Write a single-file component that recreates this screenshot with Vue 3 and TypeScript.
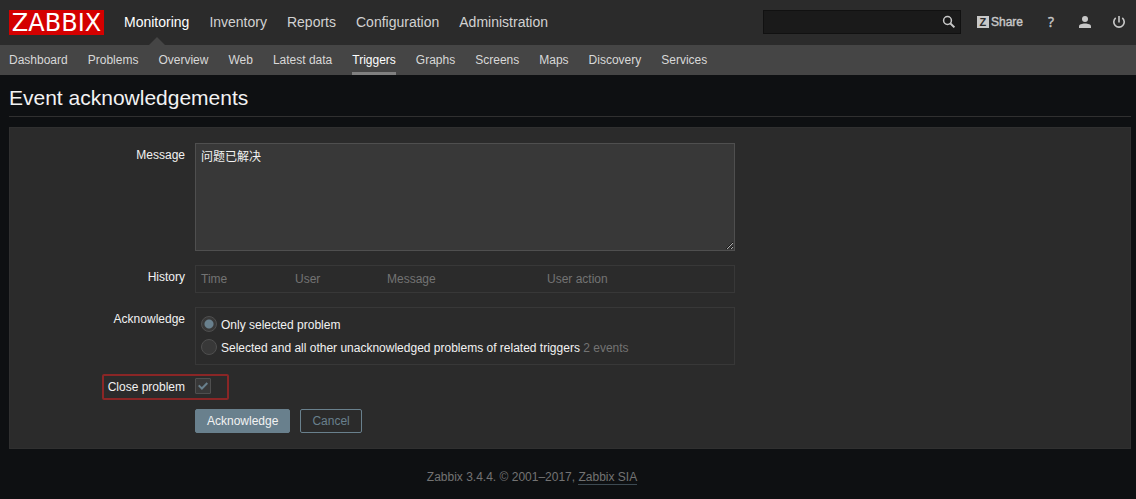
<script setup lang="ts">
import { ref } from 'vue'

const mainMenu: string[] = ['Monitoring', 'Inventory', 'Reports', 'Configuration', 'Administration']
const subMenu: string[] = [
  'Dashboard', 'Problems', 'Overview', 'Web', 'Latest data', 'Triggers',
  'Graphs', 'Screens', 'Maps', 'Discovery', 'Services',
]
const historyColumns: string[] = ['Time', 'User', 'Message', 'User action']

const activeMain = ref('Monitoring')
const activeSub = ref('Triggers')
const search = ref('')
const message = ref('问题已解决')
const scope = ref<'selected' | 'all'>('selected')
const closeProblem = ref(true)
</script>

<template>
  <div class="page">
    <header class="top">
      <a class="logo" href="#">ZABBIX</a>
      <nav class="main-nav" aria-label="Main">
        <a
          v-for="item in mainMenu"
          :key="item"
          href="#"
          :class="{ active: item === activeMain }"
          @click.prevent="activeMain = item"
        >{{ item }}</a>
      </nav>
      <form class="search" role="search" @submit.prevent>
        <input v-model="search" type="text" aria-label="Search">
        <button type="submit" aria-label="Search">
          <svg width="14" height="14" viewBox="0 0 14 14" fill="none" stroke="#c8c8c8">
            <circle cx="5.5" cy="5.5" r="3.9" stroke-width="1.5" />
            <path d="M8.2 8.2 L12.4 12.4" stroke-width="2" />
          </svg>
        </button>
      </form>
      <div class="tools">
        <a class="share" href="#"><span class="z-mark">Z</span>Share</a>
        <a class="tool help" href="#" aria-label="Help">?</a>
        <a class="tool" href="#" aria-label="Profile">
          <svg width="12" height="12" viewBox="0 0 12 12" fill="#c8c8c8">
            <circle cx="6" cy="3" r="3" />
            <path d="M0 12 V10.2 C0 8.4 3 7.4 6 7.4 S12 8.4 12 10.2 V12 Z" />
          </svg>
        </a>
        <a class="tool" href="#" aria-label="Sign out">
          <svg width="12" height="12" viewBox="0 0 12 12" fill="none" stroke="#c8c8c8" stroke-width="1.6">
            <path d="M6 0 V6.5" />
            <path d="M2.7 1.9 A5.2 5.2 0 1 0 9.3 1.9" />
          </svg>
        </a>
      </div>
    </header>

    <nav class="sub-nav" aria-label="Monitoring">
      <a
        v-for="item in subMenu"
        :key="item"
        href="#"
        :class="{ active: item === activeSub }"
        @click.prevent="activeSub = item"
      >{{ item }}</a>
    </nav>

    <main>
      <h1>Event acknowledgements</h1>
      <form class="panel" @submit.prevent>
        <div class="row">
          <label class="name" for="message">Message</label>
          <textarea id="message" v-model="message" class="field" spellcheck="false"></textarea>
        </div>

        <div class="row">
          <span id="history" class="name">History</span>
          <div class="field box">
            <table aria-labelledby="history">
              <colgroup>
                <col class="c-time"><col class="c-user"><col class="c-message"><col>
              </colgroup>
              <thead>
                <tr><th v-for="c in historyColumns" :key="c" scope="col">{{ c }}</th></tr>
              </thead>
            </table>
          </div>
        </div>

        <div class="row">
          <span id="scope" class="name">Acknowledge</span>
          <div class="field box options" role="radiogroup" aria-labelledby="scope">
            <label><input v-model="scope" type="radio" name="scope" value="selected"><span>Only selected problem</span></label>
            <label><input v-model="scope" type="radio" name="scope" value="all"><span>Selected and all other unacknowledged problems of related triggers <span class="grey">2 events</span></span></label>
          </div>
        </div>

        <div class="row close-row">
          <label class="name" for="close">Close problem</label>
          <span class="check">
            <input id="close" v-model="closeProblem" type="checkbox">
            <svg v-if="closeProblem" width="10" height="8" viewBox="0 0 10 8" fill="none" stroke="#69808d" stroke-width="2">
              <path d="M0.7 3.4 L3.9 6.5 L9.3 1" />
            </svg>
          </span>
        </div>

        <div class="actions">
          <button type="submit" class="btn primary">Acknowledge</button>
          <button type="button" class="btn">Cancel</button>
        </div>
      </form>
    </main>

    <footer>Zabbix 3.4.4. © 2001–2017, <a href="#">Zabbix SIA</a></footer>
  </div>
</template>

<style>
html, body {
  margin: 0;
  background: #0e1012;
}
</style>

<style scoped>
.page {
  min-height: 100vh;
  box-sizing: border-box;
  font: 12px/14px "Liberation Sans", Arial, "Noto Sans CJK SC", sans-serif;
  color: #f2f2f2;
}
a {
  color: inherit;
  text-decoration: none;
}
input, textarea, button {
  font: inherit;
  color: inherit;
  box-sizing: border-box;
  margin: 0;
}
.top {
  display: flex;
  align-items: center;
  height: 45px;
  padding: 0 11px 0 9px;
  background: #2b2b2b;
}
.logo {
  width: 95px;
  height: 25px;
  background: #d40000;
  color: #fff;
  font: 24px/27px "DejaVu Sans", sans-serif;
  text-align: center;
}
.main-nav {
  display: flex;
  gap: 20px;
  margin-left: 20px;
  font-size: 14px;
  line-height: 45px;
  color: #d2d2d2;
}
.main-nav .active {
  position: relative;
  color: #fff;
}
.main-nav .active::after {
  content: "";
  position: absolute;
  left: 50%;
  bottom: 0;
  margin-left: -8px;
  border: 8px solid transparent;
  border-top: 0;
  border-bottom-color: #454545;
}
.search {
  display: flex;
  position: relative;
  margin-left: auto;
  margin-right: 16px;
  margin-bottom: 1px;
}
.search input {
  width: 198px;
  height: 24px;
  padding: 0 24px 0 5px;
  background: #1a1a1a;
  border: 1px solid #111;
}
.search button {
  position: absolute;
  top: 0;
  right: 0;
  display: flex;
  align-items: center;
  justify-content: center;
  width: 24px;
  height: 24px;
  padding: 0;
  border: 0;
  background: none;
}
.tools {
  display: flex;
  align-items: center;
  gap: 22px;
  padding-bottom: 2px;
  color: #c8c8c8;
}
.share {
  display: flex;
  align-items: center;
  gap: 2px;
  -webkit-text-stroke: 0.4px #c8c8c8;
}
.z-mark {
  width: 12px;
  height: 12px;
  background: #c8c8c8;
  color: #2b2b2b;
  font-weight: bold;
  font-size: 11px;
  line-height: 12px;
  text-align: center;
  -webkit-text-stroke: 0;
}
.tool {
  display: flex;
  justify-content: center;
  width: 12px;
}
.help {
  font: 14px/14px "Open Sans", sans-serif;
  -webkit-text-stroke: 0.4px #c8c8c8;
}
.sub-nav {
  display: flex;
  gap: 20px;
  height: 30px;
  padding: 0 9px;
  background: #454545;
  color: #d8d8d8;
  line-height: 30px;
}
.sub-nav .active {
  color: #fff;
  box-shadow: inset 0 -3px #808080;
}
main {
  padding: 0 5px 0 9px;
}
h1 {
  margin: 0 0 10px;
  padding: 10px 0 5px;
  border-bottom: 1px solid #303030;
  font-size: 21px;
  font-weight: normal;
  line-height: 26px;
}
.panel {
  display: flex;
  flex-direction: column;
  gap: 14px;
  padding: 15px 9px 15px 0;
  background: #2b2b2b;
  border: 1px solid #303030;
}
.row {
  display: flex;
  gap: 10px;
}
.name {
  width: 175px;
  flex: none;
  padding-top: 5px;
  text-align: right;
}
.field {
  flex: 0 1 540px;
  box-sizing: border-box;
}
textarea {
  height: 108px;
  padding: 4px 5px;
  line-height: 18px;
  background: #383838;
  border: 1px solid #4f4f4f;
  outline: 0;
}
.box {
  border: 1px solid #383838;
}
table {
  width: 100%;
  table-layout: fixed;
  border-collapse: collapse;
}
.c-time { width: 94px; }
.c-user { width: 92px; }
.c-message { width: 160px; }
th {
  padding: 6px 5px;
  font-weight: normal;
  text-align: left;
  color: #737373;
}
.options {
  display: flex;
  flex-direction: column;
  gap: 7px;
  padding: 8px 5px 9px;
}
.options label {
  display: flex;
  align-items: flex-end;
  gap: 4px;
  height: 16px;
}
.options input {
  appearance: none;
  flex: none;
  width: 16px;
  height: 16px;
  border: 1px solid #4f4f4f;
  border-radius: 50%;
  background: #383838;
}
.options input:checked {
  background: radial-gradient(circle, #69808d 4px, #383838 5px);
}
.grey {
  color: #737373;
}
.close-row {
  position: relative;
  height: 16px;
  margin-top: -1px;
  margin-bottom: 1px;
}
.close-row .name {
  padding-top: 2px;
}
.close-row::after {
  content: "";
  position: absolute;
  left: 92px;
  top: -4px;
  width: 127px;
  height: 26px;
  box-sizing: border-box;
  border: 2px solid #8a2626;
  border-radius: 2px;
  pointer-events: none;
}
.check {
  display: grid;
  place-items: center;
}
.check > * {
  grid-area: 1 / 1;
}
.check input {
  appearance: none;
  width: 16px;
  height: 16px;
  border: 1px solid #4f4f4f;
  border-radius: 1px;
  background: #383838;
}
.check svg {
  pointer-events: none;
}
.actions {
  display: flex;
  gap: 10px;
  margin-left: 185px;
}
.btn {
  height: 24px;
  padding: 0 11px;
  border: 1px solid #69808d;
  border-radius: 2px;
  background: none;
  color: #69808d;
}
.primary {
  background: #69808d;
  color: #f2f2f2;
}
footer {
  padding: 21px 72px 13px 0;
  text-align: center;
  color: #737373;
}
footer a {
  display: inline-block;
  border-bottom: 1px solid #3d4a52;
}
</style>
